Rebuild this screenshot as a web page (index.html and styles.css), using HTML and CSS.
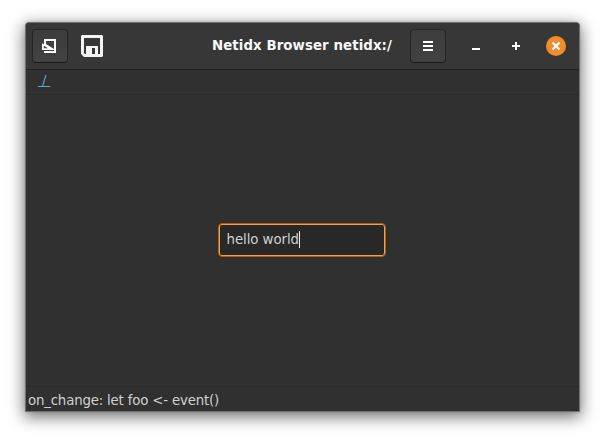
FILE: index.html
```html
<!DOCTYPE html>
<html lang="en">
<head>
<meta charset="utf-8">
<title>Netidx Browser</title>
<link rel="stylesheet" href="styles.css">
</head>
<body>
<main class="window">
  <header class="titlebar">
    <button class="button" aria-label="Design mode">
      <svg width="16" height="16" viewBox="0 0 16 16"><path fill="#fff" fill-rule="evenodd" d="M2 1H14V15H2V13H12V3H4V6L12 11V12H0V5.5L2 6ZM1.8 7.8V10.2H6Z"/></svg>
    </button>
    <button class="save" aria-label="Save">
      <svg width="22" height="22" viewBox="0 0 22 22"><path fill="#f4f4f4" fill-rule="evenodd" d="M1 0H21L22 1V21L21 22H3L0 19V1ZM3 3V18L4 19H5V11H17V19H19V3ZM11 13V19H14V13Z"/></svg>
    </button>
    <h1 class="title">Netidx Browser netidx:/</h1>
    <button class="button menu" aria-label="Menu">
      <svg width="10" height="10" viewBox="0 0 10 10"><path fill="#fff" d="M0 0H10V2H0ZM0 4H10V6H0ZM0 8H10V10H0Z"/></svg>
    </button>
    <div class="controls">
      <button class="control" aria-label="Minimize"><svg width="16" height="16" viewBox="0 0 16 16"><path fill="#fff" d="M4 10H12V12H4Z"/></svg></button>
      <button class="control" aria-label="Maximize"><svg width="16" height="16" viewBox="0 0 16 16"><path fill="#fff" d="M7 4H9V7H12V9H9V12H7V9H4V7H7Z"/></svg></button>
      <button class="control close" aria-label="Close"><svg width="16" height="16" viewBox="0 0 16 16"><path stroke="#fff" stroke-width="2.2" d="M4.5 4.5L11.5 11.5M11.5 4.5L4.5 11.5"/></svg></button>
    </div>
  </header>
  <nav class="path"><a class="root"> / </a></nav>
  <section class="content">
    <div class="entry"><span>hello world</span><i class="caret"></i></div>
  </section>
  <footer class="status">on_change: let foo &lt;- event()</footer>
</main>
</body>
</html>
```
FILE: styles.css
```css
* { box-sizing: border-box; }
body {
  margin: 0;
  width: 605px;
  height: 440px;
  padding: 22px 25px 28px;
  overflow: hidden;
  background: #fff;
  font: 13.333px/18px "DejaVu Sans", sans-serif;
  color: #d0d0d0;
}
.window {
  display: flex;
  flex-direction: column;
  width: 555px;
  height: 390px;
  border: 1px solid #707070;
  border-radius: 4px 4px 0 0;
  background: #303030;
  box-shadow: 0 4px 16px 1px rgba(0,0,0,.55), 0 0 3px rgba(0,0,0,.15);
}
.titlebar {
  display: flex;
  align-items: center;
  height: 47px;
  padding: 0 13px 0 6px;
  border-bottom: 1px solid #212121;
  border-radius: 3px 3px 0 0;
  background: #373737;
}
button {
  display: flex;
  align-items: center;
  justify-content: center;
  flex: none;
  margin: 0;
  padding: 0;
  border: 0;
  background: none;
}
.button {
  width: 36px;
  height: 34px;
  border: 1px solid #242424;
  border-bottom-color: #171717;
  border-radius: 4px;
  background: linear-gradient(#3c3c3c, #424242);
}
.save { width: 22px; margin-left: 13px; }
.title {
  flex: none;
  width: 182px;
  margin: 0 16px 0 109px;
  font-size: 13.333px;
  line-height: 18px;
  font-weight: bold;
  letter-spacing: .08px;
  white-space: nowrap;
  color: #f7f7f7;
}
.controls {
  display: flex;
  gap: 20px;
  margin-left: auto;
}
.control { width: 20px; height: 20px; }
.close { border-radius: 50%; background: #f28b2b; }
.path {
  height: 25px;
  padding: 2px 0 0 12px;
  border-bottom: 1px solid #2a2a2a;
}
.root {
  white-space: pre;
  letter-spacing: -.25px;
  text-decoration: underline;
  text-underline-offset: 1px;
  text-decoration-thickness: 1px;
  color: #59a9c0;
}
.content {
  display: flex;
  flex: 1;
  align-items: center;
  justify-content: center;
  padding: 0 2px 2px 0;
}
.entry {
  display: flex;
  align-items: center;
  width: 168px;
  height: 34px;
  padding: 0 7px 0 8px;
  border: 1px solid #a96018;
  border-radius: 4px;
  background: #282828;
  box-shadow: inset 0 0 0 1px #f3a04a;
  letter-spacing: -.06px;
}
.caret { width: 1px; height: 17px; background: #eee; }
.status {
  height: 25px;
  padding: 5px 2px 0;
  border-top: 1px solid #2a2a2a;
  letter-spacing: -.18px;
}
```
